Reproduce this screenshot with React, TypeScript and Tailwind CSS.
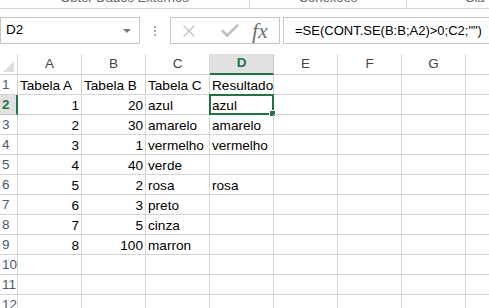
import { X, Check } from "lucide-react";

const cols = ["A", "B", "C", "D", "E", "F", "G", "H"];

const rows: (string | number | null)[][] = [
  ["Tabela A", "Tabela B", "Tabela C", "Resultado"],
  [1, 20, "azul", "azul"],
  [2, 30, "amarelo", "amarelo"],
  [3, 1, "vermelho", "vermelho"],
  [4, 40, "verde", null],
  [5, 2, "rosa", "rosa"],
  [6, 3, "preto", null],
  [7, 5, "cinza", null],
  [8, 100, "marron", null],
  [null, null, null, null],
  [null, null, null, null],
  [null, null, null, null],
];

function Cell({ value, selected }: { value: string | number | null; selected?: boolean }) {
  const num = typeof value === "number";
  return (
    <div
      className={`relative h-[20px] w-[64px] shrink-0 border-r border-b border-[#d4d4d4] flex items-end text-[13.6px] leading-[16px] text-black whitespace-nowrap ${
        num ? "justify-end pr-[2px]" : "pl-[2px]"
      }`}
    >
      {value ?? ""}
      {selected && (
        <div className="absolute -left-[1px] -top-[1px] -right-[1px] -bottom-[1px] border-2 border-[#217346]">
          <div className="absolute -right-[4px] -bottom-[4px] w-[7px] h-[7px] bg-[#217346] border border-white" />
        </div>
      )}
    </div>
  );
}

export default function App() {
  return (
    <div className="w-[489px] h-[308px] overflow-hidden bg-white font-['Liberation_Sans',Arial,sans-serif]">
      {/* ribbon group labels, cut off by the window */}
      <div className="h-[9px] border-b border-[#d4d4d4] flex overflow-hidden text-[13px] text-[#666] bg-[#fdfdfd]">
        <div className="w-[250px] border-r border-[#d4d4d4] flex justify-center">
          <span className="-mt-[10px] leading-[16px]">Obter Dados Externos</span>
        </div>
        <div className="w-[157px] border-r border-[#d4d4d4] flex justify-center">
          <span className="-mt-[10px] leading-[16px]">Conexões</span>
        </div>
        <div className="flex-1 pl-[58px]">
          <span className="-mt-[10px] leading-[16px] block">Cla</span>
        </div>
      </div>

      {/* formula bar */}
      <div className="h-[45px] flex items-start pt-[8px]">
        <div className="w-[140px] h-[27px] border border-[#c6c6c6] flex items-center justify-between pl-[5px] pr-[8px] text-[13.5px] text-black">
          <span>D2</span>
          <span className="w-0 h-0 border-l-[4px] border-r-[4px] border-t-[4px] border-l-transparent border-r-transparent border-t-[#777]" />
        </div>
        <div className="w-[30px] h-[27px] flex flex-col items-center justify-center gap-[2px]">
          <span className="w-[2px] h-[2px] bg-[#aaa]" />
          <span className="w-[2px] h-[2px] bg-[#aaa]" />
          <span className="w-[2px] h-[2px] bg-[#aaa]" />
        </div>
        <div className="w-[110px] h-[27px] border border-[#c6c6c6] flex items-center pl-[8px]">
          <X size={20} strokeWidth={1.6} className="text-[#c3c3c3]" />
          <Check size={22} strokeWidth={3.2} className="text-[#c3c3c3] ml-[20px]" />
          <span className="ml-[11px] font-['Liberation_Serif',serif] italic text-[22px] text-[#707070] leading-none">fx</span>
        </div>
        <div className="ml-[3px] flex-1 h-[27px] border border-[#c6c6c6] border-r-0 flex items-center pl-[11px] text-[13px] text-black whitespace-nowrap">
          =SE(CONT.SE(B:B;A2)&gt;0;C2;"")
        </div>
      </div>

      {/* grid */}
      <div className="flex flex-col">
        <div className="flex h-[21px]">
          <div className="relative w-[18px] shrink-0 border-r border-b border-[#d4d4d4]">
            <div
              className="absolute right-[3px] bottom-[2px] w-0 h-0"
              style={{ borderRight: "11px solid #dcdcdc", borderTop: "11px solid transparent" }}
            />
          </div>
          {cols.map((c) => (
            <div
              key={c}
              className={`w-[64px] shrink-0 flex items-center justify-center text-[13.5px] ${
                c === "D"
                  ? "bg-[#e1e1e1] border-r border-[#c6c6c6] border-b-2 border-b-[#217346] text-[#217346] font-bold"
                  : "border-r border-b border-[#d4d4d4] text-[#444]"
              }`}
            >
              {c}
            </div>
          ))}
        </div>
        {rows.map((r, i) => (
          <div key={i} className="flex">
            <div
              className={`w-[18px] h-[20px] shrink-0 flex items-center pl-[2px] pt-[1px] text-[13.5px] ${
                i === 1
                  ? "bg-[#e1e1e1] border-r-2 border-r-[#217346] border-b border-[#c6c6c6] text-[#217346] font-bold"
                  : "border-r border-b border-[#d4d4d4] text-[#4a5a72]"
              }`}
            >
              {i + 1}
            </div>
            {cols.map((c, j) => (
              <Cell key={c} value={r[j] ?? null} selected={i === 1 && j === 3} />
            ))}
          </div>
        ))}
      </div>
    </div>
  );
}
